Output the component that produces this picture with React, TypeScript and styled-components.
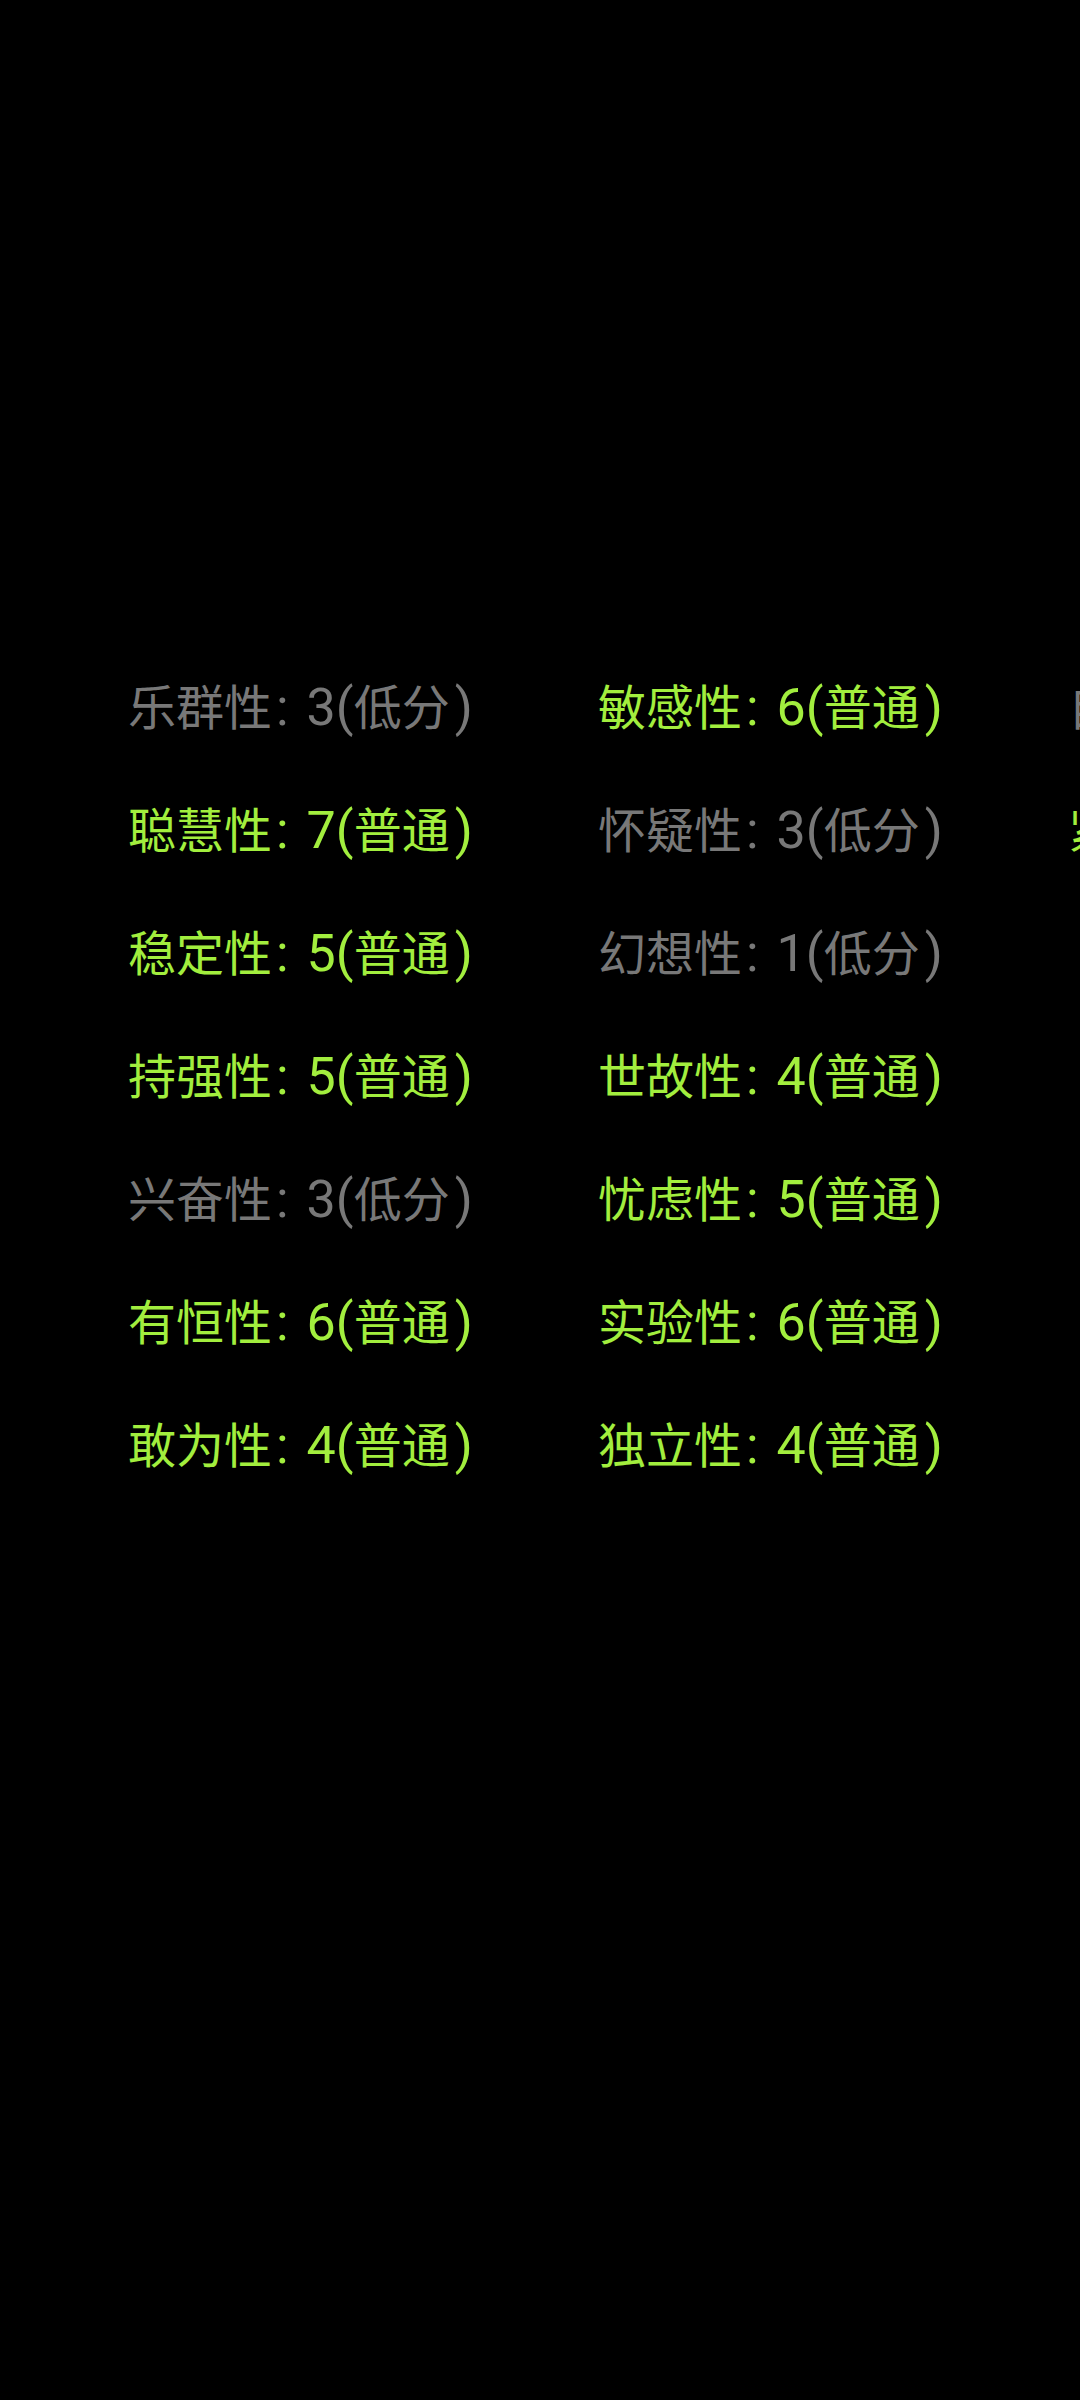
import React from "react";
import styled, { createGlobalStyle } from "styled-components";

const Global = createGlobalStyle`
  html, body {
    margin: 0;
    padding: 0;
    background: #000;
    overflow: hidden;
  }
  #root {
    min-height: 2400px;
    background: #000;
  }
`;

const Screen = styled.div`
  width: 1080px;
  height: 2400px;
  overflow: hidden;
  background: #000;
  padding: 643px 0 0 128px;
  box-sizing: border-box;
`;

const Grid = styled.div`
  display: grid;
  grid-auto-flow: column;
  grid-template-rows: repeat(7, 123px);
  grid-auto-columns: 470px;
  width: max-content;
`;

const Trait = styled.div<{ $normal: boolean }>`
  line-height: 123px;
  white-space: nowrap;
  font-family: "Noto Sans CJK SC", sans-serif;
  font-size: 48px;
  font-weight: 400;
  color: ${(p) => (p.$normal ? "#a2ee3e" : "#787878")};
`;

const Han = styled.span`
  font-family: "Noto Sans CJK SC", sans-serif;
  font-size: 48px;
`;

const Latin = styled.span<{ $before?: number; $after?: number }>`
  font-family: Roboto, "Noto Sans CJK SC", sans-serif;
  font-size: 52px;
  margin-left: ${(p) => p.$before ?? 0}px;
  margin-right: ${(p) => p.$after ?? 0}px;
`;

type Item = { name: string; score: number };

const items: Item[] = [
  { name: "乐群性", score: 3 },
  { name: "聪慧性", score: 7 },
  { name: "稳定性", score: 5 },
  { name: "持强性", score: 5 },
  { name: "兴奋性", score: 3 },
  { name: "有恒性", score: 6 },
  { name: "敢为性", score: 4 },
  { name: "敏感性", score: 6 },
  { name: "怀疑性", score: 3 },
  { name: "幻想性", score: 1 },
  { name: "世故性", score: 4 },
  { name: "忧虑性", score: 5 },
  { name: "实验性", score: 6 },
  { name: "独立性", score: 4 },
  { name: "自律性", score: 3 },
  { name: "紧张性", score: 6 },
];

export default function App() {
  return (
    <>
      <Global />
      <Screen>
        <Grid>
          {items.map((it) => {
            const normal = it.score >= 4;
            return (
              <Trait key={it.name} $normal={normal}>
                <Han>{it.name}</Han>
                <Latin $before={4} $after={18}>:</Latin>
                <Latin $after={0}>{it.score}(</Latin>
                <Han>{normal ? "普通" : "低分"}</Han>
                <Latin $before={5}>)</Latin>
              </Trait>
            );
          })}
        </Grid>
      </Screen>
    </>
  );
}
